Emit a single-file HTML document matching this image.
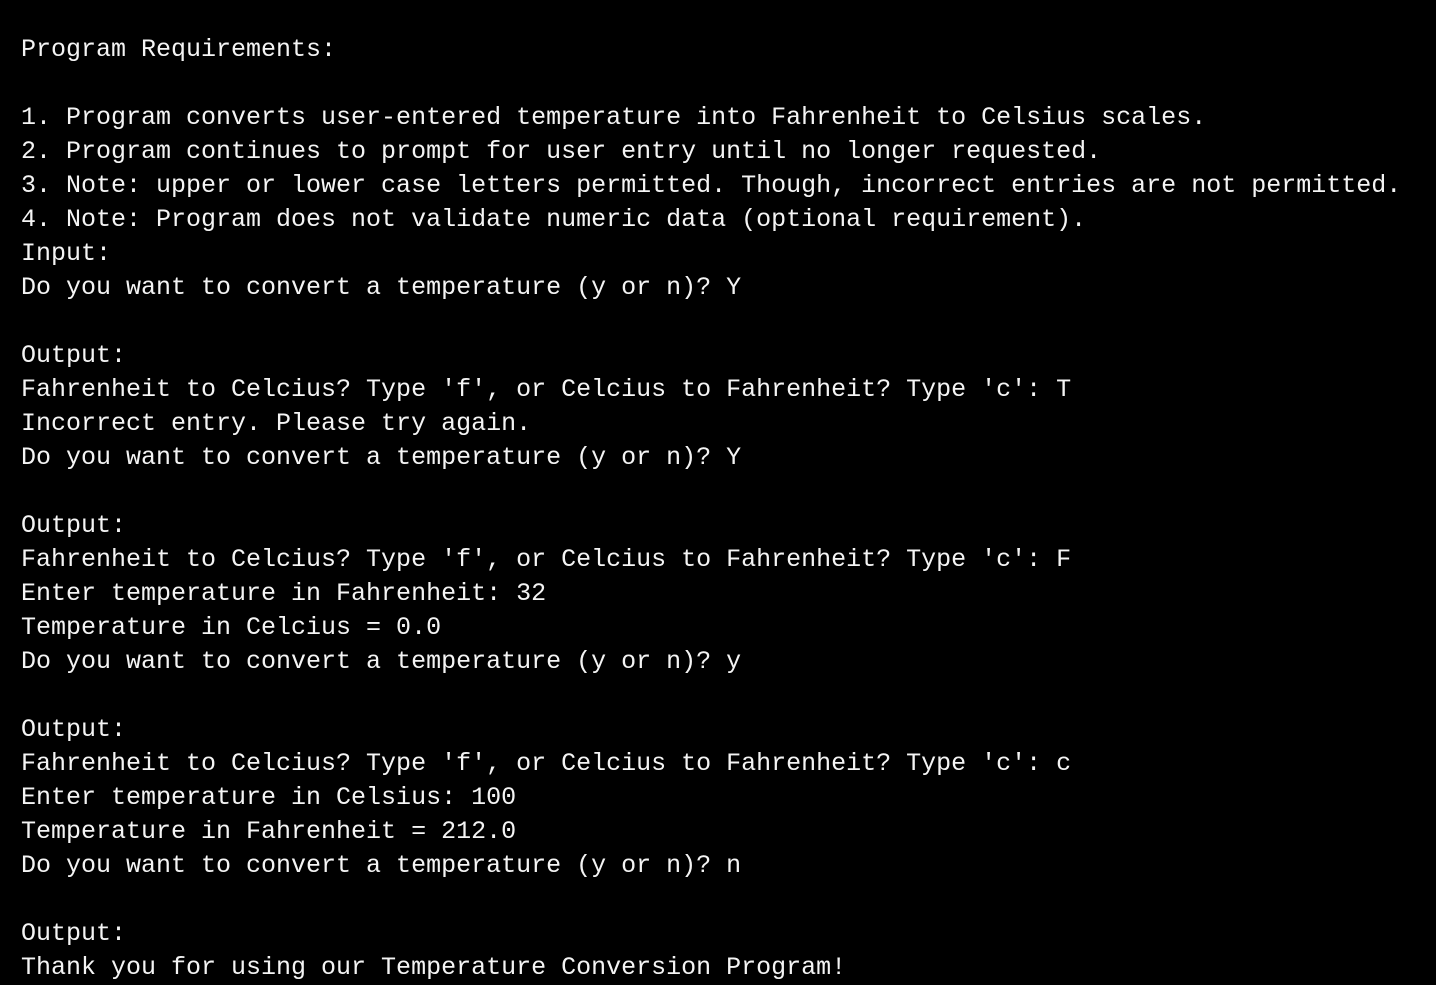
<!DOCTYPE html>
<html><head><meta charset="utf-8"><style>
html,body{margin:0;padding:0;background:#000;width:1436px;height:981px;overflow:hidden}
pre{margin:0;position:absolute;left:21px;top:33px;color:#f4f4f4;font-family:"Liberation Mono",monospace;font-size:25px;line-height:34px;letter-spacing:0}
</style></head><body><pre>Program Requirements:

1. Program converts user-entered temperature into Fahrenheit to Celsius scales.
2. Program continues to prompt for user entry until no longer requested.
3. Note: upper or lower case letters permitted. Though, incorrect entries are not permitted.
4. Note: Program does not validate numeric data (optional requirement).
Input:
Do you want to convert a temperature (y or n)? Y

Output:
Fahrenheit to Celcius? Type 'f', or Celcius to Fahrenheit? Type 'c': T
Incorrect entry. Please try again.
Do you want to convert a temperature (y or n)? Y

Output:
Fahrenheit to Celcius? Type 'f', or Celcius to Fahrenheit? Type 'c': F
Enter temperature in Fahrenheit: 32
Temperature in Celcius = 0.0
Do you want to convert a temperature (y or n)? y

Output:
Fahrenheit to Celcius? Type 'f', or Celcius to Fahrenheit? Type 'c': c
Enter temperature in Celsius: 100
Temperature in Fahrenheit = 212.0
Do you want to convert a temperature (y or n)? n

Output:
Thank you for using our Temperature Conversion Program!</pre></body></html>
